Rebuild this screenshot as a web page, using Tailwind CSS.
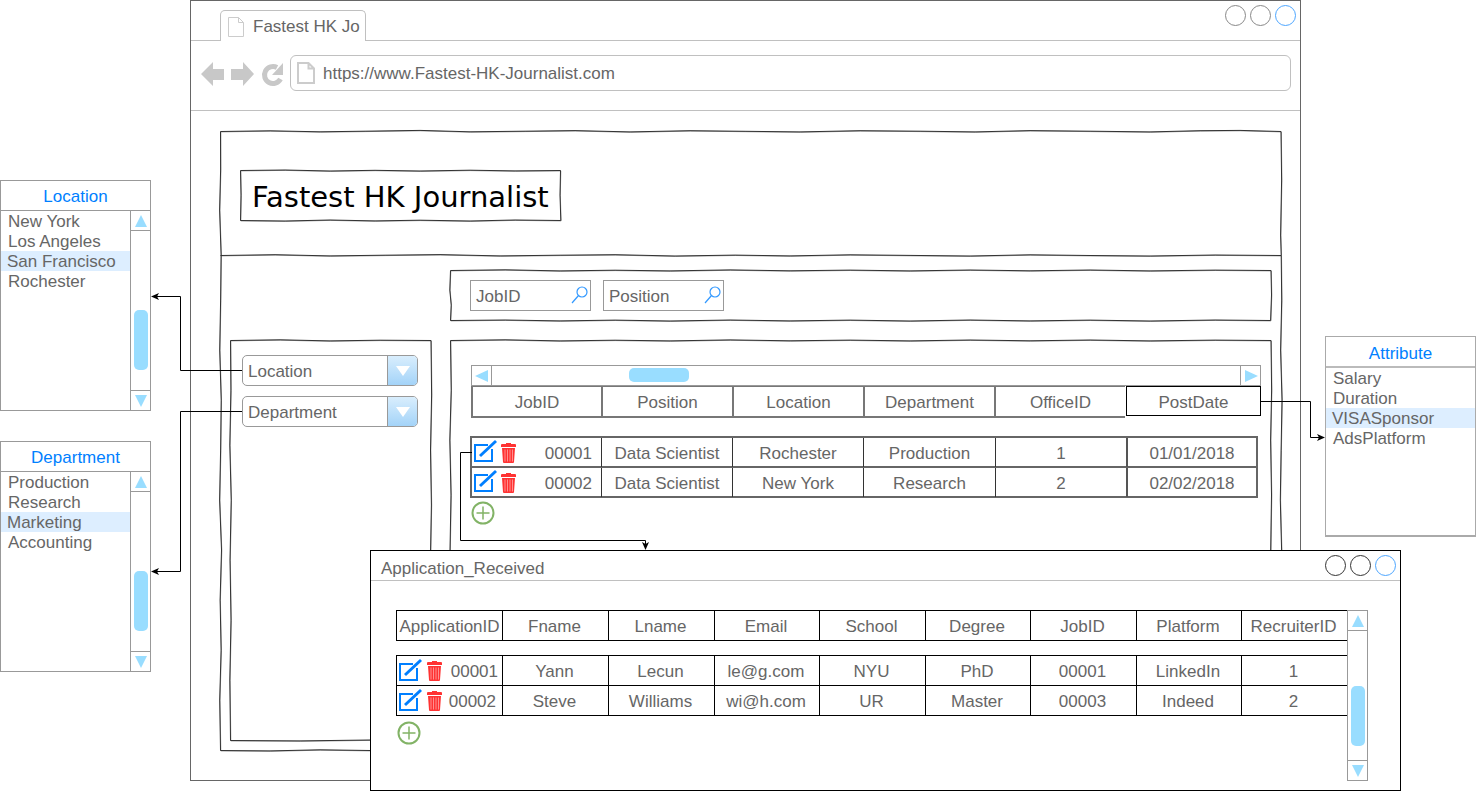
<!DOCTYPE html>
<html lang="en">
<head>
  <meta charset="UTF-8" />
  <title>Fastest HK Journalist wireframe</title>
  <script src="https://cdn.jsdelivr.net/npm/@tailwindcss/browser@4"></script>
</head>
<body class="bg-white">
<div class="relative w-[1476px] h-[791px] overflow-hidden bg-white font-['Liberation_Sans',Arial,sans-serif] text-[17px] text-[#666]">

  <!-- browser window -->
  <div class="absolute left-[190px] top-0 w-[1111px] h-[781px] border border-[#666] bg-white flex flex-col">
    <div class="relative h-[40px] shrink-0 border-b border-[#c0c0c0] flex items-end pl-[29px]">
      <div class="relative h-[31px] w-[146px] -mb-px bg-white border border-b-0 border-[#c0c0c0] rounded-t-[5px] flex items-center pl-[6px] pt-[1px] overflow-hidden">
        <svg class="w-[18px] h-[20px] shrink-0" viewBox="0 0 18 20" fill="none" stroke="#ccc"><path d="M1.5 .5H11.5L16.5 5.5V19.5H1.5Z M11.5 .5V5.5H16.5"/></svg>
        <span class="ml-[8px] whitespace-nowrap">Fastest HK Jo</span>
      </div>
      <div class="absolute right-[4px] top-[4px] flex gap-[4px]">
        <div class="w-[21px] h-[21px] rounded-full border border-[#888]"></div>
        <div class="w-[21px] h-[21px] rounded-full border border-[#888]"></div>
        <div class="w-[21px] h-[21px] rounded-full border border-[#4da6ff]"></div>
      </div>
    </div>
    <div class="h-[70px] shrink-0 border-b border-[#c0c0c0] flex items-start pt-[14px] pl-[10px]">
      <svg class="w-[89px] h-[36px] shrink-0" viewBox="0 0 89 36" fill="#c8c8c8">
        <path d="M0 19L12 7V14H23V25H12V31Z"/>
        <path d="M30 14H42V7L53 19L42 31V25H30Z"/>
        <path d="M79.5 24A8.5 8.5 0 1 1 76 12.5" fill="none" stroke="#c8c8c8" stroke-width="5"/>
        <path d="M82 8V20H71Z"/>
      </svg>
      <div class="w-[1001px] h-[36px] border border-[#c0c0c0] rounded-[6px] flex items-center pl-[6px]">
        <svg class="w-[18px] h-[22px] shrink-0" viewBox="0 0 18 22" fill="none" stroke="#ccc" stroke-width="2"><path d="M1 1H11.5L17 6.5V21H1Z M11.5 1V6.5H17"/></svg>
        <span class="ml-[8px] pt-[2px] whitespace-nowrap">https://www.Fastest-HK-Journalist.com</span>
      </div>
    </div>

    <!-- page frame -->
    <div class="ml-[29px] mt-[20px] w-[1061px] h-[620px] flex flex-col">
      <div class="h-[124px] shrink-0 pl-[20px] pt-[39px]">
        <div class="w-[320px] h-[50px] flex items-center pl-[12px] pt-[6px] font-['DejaVu_Sans',sans-serif] text-[29px] text-black whitespace-nowrap">Fastest HK Journalist</div>
      </div>
      <div class="flex pl-[10px]">
        <div class="w-[201px] h-[400px] mt-[85px] pl-[12px] pt-[15px] flex flex-col gap-[10px]">
          <div class="w-[176px] h-[31px] border border-[#999] rounded-[5px] overflow-hidden flex items-center pl-[5px]">
            <span class="flex-1 pt-[2px]">Location</span>
            <div class="w-[30px] h-full border-l border-[#999] bg-linear-to-b from-[#d9eefd] to-[#a3d3f8] flex items-center justify-center">
              <svg class="w-[16px] h-[12px]" viewBox="0 0 16 12" fill="#fff"><path d="M1 1H15L8 11Z"/></svg>
            </div>
          </div>
          <div class="w-[176px] h-[31px] border border-[#999] rounded-[5px] overflow-hidden flex items-center pl-[5px]">
            <span class="flex-1 pt-[2px]">Department</span>
            <div class="w-[30px] h-full border-l border-[#999] bg-linear-to-b from-[#d9eefd] to-[#a3d3f8] flex items-center justify-center">
              <svg class="w-[16px] h-[12px]" viewBox="0 0 16 12" fill="#fff"><path d="M1 1H15L8 11Z"/></svg>
            </div>
          </div>
        </div>
        <div class="w-[821px] ml-[19px] mt-[15px]">
          <div class="h-[50px] pl-[20px] pt-[10px] flex gap-[12px]">
            <div class="relative w-[121px] h-[31px] border border-[#999] flex items-center pl-[5px] pt-[2px]">JobID
              <svg class="absolute right-[1px] top-[4px] w-[18px] h-[20px]" viewBox="0 0 18 20" fill="none" stroke="#3399ff" stroke-width="1.2"><circle cx="11" cy="7" r="5"/><path d="M7.5 10.5L1 18"/></svg>
            </div>
            <div class="relative w-[121px] h-[31px] border border-[#999] flex items-center pl-[5px] pt-[2px]">Position
              <svg class="absolute right-[1px] top-[4px] w-[18px] h-[20px]" viewBox="0 0 18 20" fill="none" stroke="#3399ff" stroke-width="1.2"><circle cx="11" cy="7" r="5"/><path d="M7.5 10.5L1 18"/></svg>
            </div>
          </div>
          <div class="h-[400px] mt-[20px] pl-[21px] pt-[25px]">
            <!-- horizontal scrollbar -->
            <div class="relative w-[790px] h-[21px] border border-[#999] flex justify-between">
              <div class="w-[20px] border-r border-[#999] flex items-center justify-center">
                <svg class="w-[14px] h-[14px]" viewBox="0 0 14 14" fill="#99ddff"><path d="M0 7L13 1V13Z"/></svg>
              </div>
              <div class="absolute left-[157px] top-[2px] w-[60px] h-[14px] rounded-[5px] bg-[#99ddff]"></div>
              <div class="w-[20px] border-l border-[#999] flex items-center justify-center">
                <svg class="w-[14px] h-[14px]" viewBox="0 0 14 14" fill="#99ddff"><path d="M14 7L1 1V13Z"/></svg>
              </div>
            </div>
            <!-- jobs table -->
            <div class="grid grid-cols-[130px_131px_131px_131px_131px_136px] w-[790px] h-[32px] -mt-px">
              <div class="border-y-2 border-l-2 border-[#777] flex items-center justify-center pt-[3px]">JobID</div>
              <div class="border-y-2 border-l-2 border-[#777] flex items-center justify-center pt-[3px]">Position</div>
              <div class="border-y-2 border-l-2 border-[#777] flex items-center justify-center pt-[3px]">Location</div>
              <div class="border-y-2 border-l-2 border-[#777] flex items-center justify-center pt-[3px]">Department</div>
              <div class="border-y-2 border-l-2 border-[#777] flex items-center justify-center pt-[3px]">OfficeID</div>
              <div class="border border-black ml-px mt-px h-[30px] flex items-center justify-center pt-[4px]">PostDate</div>
            </div>
            <div class="-ml-px mt-[19px] w-[788px]">
              <div class="grid grid-cols-[129px_131px_131px_132px_131px_130px] h-[32px] border-2 border-[#666]">
                <div class="flex items-center pl-[1px] pr-[9px] pt-[1px]">
                  <svg class="w-[24px] h-[24px] shrink-0 -mt-[3px]" viewBox="0 0 24 24" fill="none" stroke="#007fff"><path d="M15 6H2V22H19V10" stroke-width="2"/><path d="M7 17L23 2" stroke-width="3"/></svg>
                  <svg class="ml-[4px] w-[15px] h-[20px] shrink-0" viewBox="0 0 15 20"><path fill="#ff3333" d="M5 0H10V1H14Q15 1 15 2V4H0V2Q0 1 1 1H5Z M1 5H14L13 19Q13 20 12 20H3Q2 20 2 19Z"/><path d="M4 6.5V18.5M6.5 6.5V18.5M9 6.5V18.5M11.5 6.5V18.5" stroke="#ff9a9a" stroke-width=".9"/></svg>
                  <span class="ml-auto pt-[2px]">00001</span>
                </div>
                <div class="border-l border-[#333] flex items-center justify-center pt-[3px]">Data Scientist</div>
                <div class="border-l border-[#333] flex items-center justify-center pt-[3px]">Rochester</div>
                <div class="border-l border-[#333] flex items-center justify-center pt-[3px]">Production</div>
                <div class="border-l border-[#333] flex items-center justify-center pt-[3px]">1</div>
                <div class="border-l-2 border-[#555] flex items-center justify-center pt-[3px]">01/01/2018</div>
              </div>
              <div class="grid grid-cols-[129px_131px_131px_132px_131px_130px] h-[32px] -mt-[2px] border-2 border-[#666]">
                <div class="flex items-center pl-[1px] pr-[9px] pt-[1px]">
                  <svg class="w-[24px] h-[24px] shrink-0 -mt-[3px]" viewBox="0 0 24 24" fill="none" stroke="#007fff"><path d="M15 6H2V22H19V10" stroke-width="2"/><path d="M7 17L23 2" stroke-width="3"/></svg>
                  <svg class="ml-[4px] w-[15px] h-[20px] shrink-0" viewBox="0 0 15 20"><path fill="#ff3333" d="M5 0H10V1H14Q15 1 15 2V4H0V2Q0 1 1 1H5Z M1 5H14L13 19Q13 20 12 20H3Q2 20 2 19Z"/><path d="M4 6.5V18.5M6.5 6.5V18.5M9 6.5V18.5M11.5 6.5V18.5" stroke="#ff9a9a" stroke-width=".9"/></svg>
                  <span class="ml-auto pt-[2px]">00002</span>
                </div>
                <div class="border-l border-[#333] flex items-center justify-center pt-[3px]">Data Scientist</div>
                <div class="border-l border-[#333] flex items-center justify-center pt-[3px]">New York</div>
                <div class="border-l border-[#333] flex items-center justify-center pt-[3px]">Research</div>
                <div class="border-l border-[#333] flex items-center justify-center pt-[3px]">2</div>
                <div class="border-l-2 border-[#555] flex items-center justify-center pt-[3px]">02/02/2018</div>
              </div>
            </div>
            <svg class="mt-[3px] w-[24px] h-[24px]" viewBox="0 0 24 24" fill="none" stroke="#82b366"><circle cx="12" cy="12" r="10.5" stroke-width="2"/><path d="M5.5 12H18.5M12 5.5V18.5" stroke-width="1.5"/></svg>
          </div>
        </div>
      </div>
    </div>
  </div>

  <!-- wobbly hand-drawn frames -->
  <svg class="absolute left-0 top-0 w-[1476px] h-[791px] pointer-events-none" viewBox="0 0 1476 791" fill="none">
    <defs>
      <g id="frames">
        <path d="M220.5 131.5L270 130.8L320 131.8L365 131.2L420 130.4L470 131.8L525 131.2L575 130.6L630 131.9L690 130.7L745 131.3L800 131.9L860 130.7L920 131.2L975 131.9L1030 130.6L1090 131.2L1150 131.9L1200 130.7L1240 130.4L1281 131.5L1281.6 180L1280.6 235L1281.2 255L1281.7 300L1280.6 350L1282 400L1281.1 450L1280.3 500L1281.6 550L1281 750L370 750.5L320 749.8L270 750.9L220.5 750.5L219.7 700L221.1 650L220.1 600L221.5 550L219.6 500L220.6 450L221.2 400L219.7 350L220.6 300L221.1 255L219.6 210L220.6 170Z"/>
        <path d="M220.5 255.5L275 254.7L330 255.9L385 255.2L440 254.6L500 255.9L560 255.2L615 254.7L675 256L735 255.1L790 255.9L850 254.8L910 255.4L970 256L1030 254.8L1090 255.5L1150 256L1215 255L1281 255.5"/>
        <path d="M240.5 170.5L285 170L330 171L375 170.3L420 171L470 170.2L515 170.9L560.5 170.5L560 195L560.8 220.5L515 220L470 221L420 220.2L375 220.9L330 220L285 221L240.5 220.5L241 195Z"/>
        <path d="M230.5 340.5L280 339.8L330 340.9L380 340.2L431 340.5L431.6 395L430.5 450L431.4 505L430.4 560L431.5 615L430.6 680L431 740.5L370 740L300 740.9L230.5 740.5L229.8 680L231 620L230 560L231.2 500L229.8 445L230.9 390Z"/>
        <path d="M450.5 270.5L505 269.8L560 270.9L615 270.2L670 270.9L730 269.9L790 270.8L850 270.1L910 270.9L970 270L1030 270.8L1090 270L1150 270.9L1215 270.1L1271 270.5L1271.5 295L1270.6 320.5L1215 320L1150 321L1090 320.1L1030 320.9L970 320L910 321L850 320.1L790 320.9L730 320L670 321L615 320.1L560 320.9L505 320L450.5 320.5L451.2 305L449.8 290Z"/>
        <path d="M450.5 340.5L505 339.8L560 340.9L615 340.2L670 340.9L730 339.9L790 340.8L850 340.1L910 340.9L970 340L1030 340.8L1090 340L1150 340.9L1215 340.1L1271 340.5L1271.6 390L1270.6 440L1271.5 495L1270.7 550L1271 600M450.5 340.5L451.2 390L449.8 440L451 495L450 550L450.5 600"/>
      </g>
    </defs>
    <use href="#frames" stroke="#999" transform="translate(.3 .4)"/>
    <use href="#frames" stroke="#333"/>
  </svg>

  <!-- Location list -->
  <div class="absolute left-0 top-[180px] w-[151px] h-[231px] border border-[#999] bg-white flex flex-col">
    <div class="h-[30px] shrink-0 border-b border-[#999] flex items-center justify-center pt-[2px] text-[#007fff]">Location</div>
    <div class="flex flex-1">
      <div class="flex-1 leading-[20px]">
        <div class="pl-[7px] pt-[1px] h-[20px]">New York</div>
        <div class="pl-[7px] pt-[1px] h-[20px]">Los Angeles</div>
        <div class="pl-[6px] pt-[1px] h-[20px] bg-[#ddeeff]">San Francisco</div>
        <div class="pl-[7px] pt-[1px] h-[20px]">Rochester</div>
      </div>
      <div class="w-[20px] border-l border-[#999] flex flex-col">
        <div class="h-[20px] border-b border-[#999] flex items-center justify-center"><svg class="w-[14px] h-[12px]" viewBox="0 0 14 12" fill="#99ddff"><path d="M7 0L13 12H1Z"/></svg></div>
        <div class="flex-1 pl-[3px] pt-[79px]"><div class="w-[14px] h-[60px] rounded-[5px] bg-[#99ddff]"></div></div>
        <div class="h-[20px] border-t border-[#999] flex items-center justify-center"><svg class="w-[14px] h-[12px]" viewBox="0 0 14 12" fill="#99ddff"><path d="M7 12L13 0H1Z"/></svg></div>
      </div>
    </div>
  </div>

  <!-- Department list -->
  <div class="absolute left-0 top-[441px] w-[151px] h-[231px] border border-[#999] bg-white flex flex-col">
    <div class="h-[30px] shrink-0 border-b border-[#999] flex items-center justify-center pt-[2px] text-[#007fff]">Department</div>
    <div class="flex flex-1">
      <div class="flex-1 leading-[20px]">
        <div class="pl-[7px] pt-[1px] h-[20px]">Production</div>
        <div class="pl-[7px] pt-[1px] h-[20px]">Research</div>
        <div class="pl-[6px] pt-[1px] h-[20px] bg-[#ddeeff]">Marketing</div>
        <div class="pl-[7px] pt-[1px] h-[20px]">Accounting</div>
      </div>
      <div class="w-[20px] border-l border-[#999] flex flex-col">
        <div class="h-[20px] border-b border-[#999] flex items-center justify-center"><svg class="w-[14px] h-[12px]" viewBox="0 0 14 12" fill="#99ddff"><path d="M7 0L13 12H1Z"/></svg></div>
        <div class="flex-1 pl-[3px] pt-[79px]"><div class="w-[14px] h-[60px] rounded-[5px] bg-[#99ddff]"></div></div>
        <div class="h-[20px] border-t border-[#999] flex items-center justify-center"><svg class="w-[14px] h-[12px]" viewBox="0 0 14 12" fill="#99ddff"><path d="M7 12L13 0H1Z"/></svg></div>
      </div>
    </div>
  </div>

  <!-- Attribute list -->
  <div class="absolute left-[1325px] top-[336px] w-[151px] h-[201px] border border-b-2 border-[#aaa] bg-white flex flex-col">
    <div class="h-[31px] shrink-0 border-b-2 border-[#bbb] flex items-center justify-center pt-[4px] text-[#007fff]">Attribute</div>
    <div class="leading-[20px]">
      <div class="pl-[7px] pt-[1px] h-[20px]">Salary</div>
      <div class="pl-[7px] pt-[1px] h-[20px]">Duration</div>
      <div class="pl-[6px] pt-[1px] h-[20px] bg-[#ddeeff]">VISASponsor</div>
      <div class="pl-[7px] pt-[1px] h-[20px]">AdsPlatform</div>
    </div>
  </div>

  <!-- Application_Received dialog -->
  <div class="absolute left-[370px] top-[550px] w-[1031px] h-[241px] border border-black bg-white">
    <div class="h-[30px] border-b border-[#c0c0c0] flex items-center justify-between pl-[10px] pr-[4px]">
      <span class="pt-[6px]">Application_Received</span>
      <div class="flex gap-[4px]">
        <div class="w-[21px] h-[21px] rounded-full border border-[#333]"></div>
        <div class="w-[21px] h-[21px] rounded-full border border-[#333]"></div>
        <div class="w-[21px] h-[21px] rounded-full border border-[#4da6ff]"></div>
      </div>
    </div>
    <div class="flex pl-[25px] pt-[29px]">
      <div class="w-[952px]">
        <div class="grid grid-cols-[106px_106px_106px_105px_106px_105px_106px_105px_107px] h-[31px] border-y border-black">
          <div class="border-l border-black flex items-center justify-center pt-[2px]">ApplicationID</div>
          <div class="border-l border-black flex items-center justify-center pt-[2px] pr-[2px]">Fname</div>
          <div class="border-l border-black flex items-center justify-center pt-[2px] pr-[2px]">Lname</div>
          <div class="border-l border-black flex items-center justify-center pt-[2px] pr-[2px]">Email</div>
          <div class="border-l border-black flex items-center justify-center pt-[2px] pr-[2px]">School</div>
          <div class="border-l border-black flex items-center justify-center pt-[2px] pr-[2px]">Degree</div>
          <div class="border-l border-black flex items-center justify-center pt-[2px] pr-[2px]">JobID</div>
          <div class="border-l border-black flex items-center justify-center pt-[2px] pr-[2px]">Platform</div>
          <div class="border-x border-black flex items-center justify-center pt-[2px] pr-[2px]">RecruiterID</div>
        </div>
        <div class="grid grid-cols-[106px_106px_106px_105px_106px_105px_106px_105px_107px] h-[31px] mt-[14px] border-y border-black">
          <div class="border-l border-black flex items-center pl-[1px] pr-[4px]">
            <svg class="w-[24px] h-[24px] shrink-0 -mt-[2px]" viewBox="0 0 24 24" fill="none" stroke="#007fff"><path d="M15 6H2V22H19V10" stroke-width="2"/><path d="M7 17L23 2" stroke-width="3"/></svg>
            <svg class="ml-[5px] w-[15px] h-[20px] shrink-0" viewBox="0 0 15 20"><path fill="#ff3333" d="M5 0H10V1H14Q15 1 15 2V4H0V2Q0 1 1 1H5Z M1 5H14L13 19Q13 20 12 20H3Q2 20 2 19Z"/><path d="M4 6.5V18.5M6.5 6.5V18.5M9 6.5V18.5M11.5 6.5V18.5" stroke="#ff9a9a" stroke-width=".9"/></svg>
            <span class="ml-auto pt-[2px]">00001</span>
          </div>
          <div class="border-l border-black flex items-center justify-center pt-[2px] pr-[2px]">Yann</div>
          <div class="border-l border-black flex items-center justify-center pt-[2px] pr-[2px]">Lecun</div>
          <div class="border-l border-black flex items-center justify-center pt-[2px] pr-[2px]">le@g.com</div>
          <div class="border-l border-black flex items-center justify-center pt-[2px] pr-[2px]">NYU</div>
          <div class="border-l border-black flex items-center justify-center pt-[2px] pr-[2px]">PhD</div>
          <div class="border-l border-black flex items-center justify-center pt-[2px] pr-[2px]">00001</div>
          <div class="border-l border-black flex items-center justify-center pt-[2px] pr-[2px]">LinkedIn</div>
          <div class="border-x border-black flex items-center justify-center pt-[2px] pr-[2px]">1</div>
        </div>
        <div class="grid grid-cols-[106px_106px_106px_105px_106px_105px_106px_105px_107px] h-[31px] -mt-px border-y border-black">
          <div class="border-l border-black flex items-center pl-[1px] pr-[6px]">
            <svg class="w-[24px] h-[24px] shrink-0 -mt-[2px]" viewBox="0 0 24 24" fill="none" stroke="#007fff"><path d="M15 6H2V22H19V10" stroke-width="2"/><path d="M7 17L23 2" stroke-width="3"/></svg>
            <svg class="ml-[5px] w-[15px] h-[20px] shrink-0" viewBox="0 0 15 20"><path fill="#ff3333" d="M5 0H10V1H14Q15 1 15 2V4H0V2Q0 1 1 1H5Z M1 5H14L13 19Q13 20 12 20H3Q2 20 2 19Z"/><path d="M4 6.5V18.5M6.5 6.5V18.5M9 6.5V18.5M11.5 6.5V18.5" stroke="#ff9a9a" stroke-width=".9"/></svg>
            <span class="ml-auto pt-[2px]">00002</span>
          </div>
          <div class="border-l border-black flex items-center justify-center pt-[2px] pr-[2px]">Steve</div>
          <div class="border-l border-black flex items-center justify-center pt-[2px] pr-[2px]">Williams</div>
          <div class="border-l border-black flex items-center justify-center pt-[2px] pr-[2px]">wi@h.com</div>
          <div class="border-l border-black flex items-center justify-center pt-[2px] pr-[2px]">UR</div>
          <div class="border-l border-black flex items-center justify-center pt-[2px] pr-[2px]">Master</div>
          <div class="border-l border-black flex items-center justify-center pt-[2px] pr-[2px]">00003</div>
          <div class="border-l border-black flex items-center justify-center pt-[2px] pr-[2px]">Indeed</div>
          <div class="border-x border-black flex items-center justify-center pt-[2px] pr-[2px]">2</div>
        </div>
        <svg class="mt-[5px] ml-px w-[24px] h-[24px]" viewBox="0 0 24 24" fill="none" stroke="#82b366"><circle cx="12" cy="12" r="10.5" stroke-width="2"/><path d="M5.5 12H18.5M12 5.5V18.5" stroke-width="1.5"/></svg>
      </div>
      <div class="-ml-px w-[21px] h-[171px] border border-[#999] flex flex-col">
        <div class="h-[20px] border-b border-[#999] flex items-center justify-center"><svg class="w-[14px] h-[12px]" viewBox="0 0 14 12" fill="#99ddff"><path d="M7 0L13 12H1Z"/></svg></div>
        <div class="flex-1 pl-[3px] pt-[55px]"><div class="w-[14px] h-[60px] rounded-[5px] bg-[#99ddff]"></div></div>
        <div class="h-[20px] border-t border-[#999] flex items-center justify-center"><svg class="w-[14px] h-[12px]" viewBox="0 0 14 12" fill="#99ddff"><path d="M7 12L13 0H1Z"/></svg></div>
      </div>
    </div>
  </div>

  <!-- connectors -->
  <svg class="absolute left-0 top-0 w-[1476px] h-[791px] pointer-events-none" viewBox="0 0 1476 791" fill="none" stroke="#000">
    <path d="M242 370.5H180.5V296.5H156"/>
    <path d="M242 411.5H180.5V571.5H156"/>
    <path d="M1261 401.5H1310.5V437.5H1320"/>
    <path d="M472 452.5H460.5V540.5H645.5V545"/>
    <g fill="#000" stroke="none">
      <path d="M151 296.5L159 293L157 296.5L159 300Z"/>
      <path d="M151 571.5L159 568L157 571.5L159 575Z"/>
      <path d="M1325 437.5L1317 434L1319 437.5L1317 441Z"/>
      <path d="M645.5 550L642 542L645.5 544L649 542Z"/>
    </g>
  </svg>
</div>
</body>
</html>
